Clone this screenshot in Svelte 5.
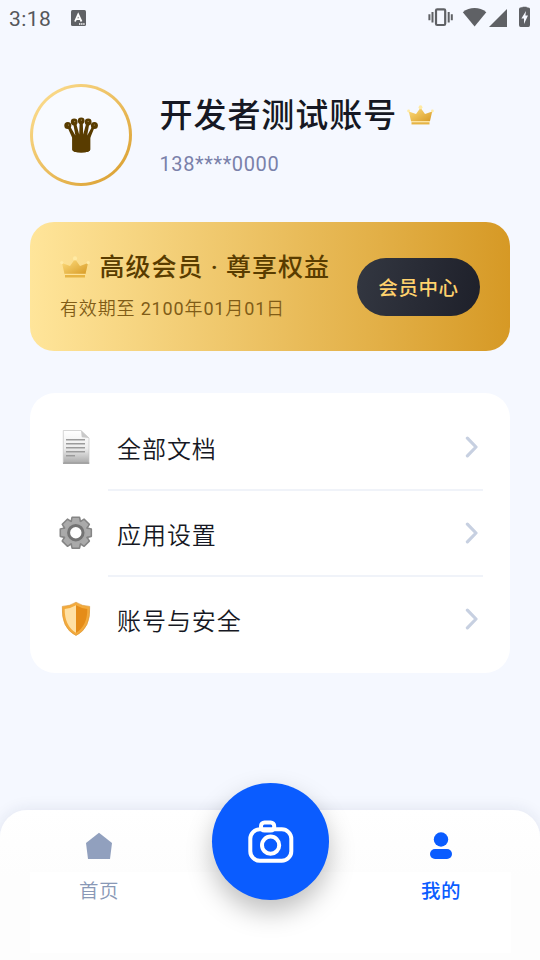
<script>
  const rows = [
    { icon: 'doc', label: '全部文档' },
    { icon: 'gear', label: '应用设置' },
    { icon: 'shield', label: '账号与安全' }
  ];
  const teeth = [0, 45, 90, 135, 180, 225, 270, 315];
</script>

{#snippet crown(w, h, id)}
  <svg width={w} height={h} viewBox="0 0 30 22">
    <defs>
      <linearGradient id={id} x1="0" y1="0" x2="1" y2="1">
        <stop offset="0" stop-color="#ffdf80" /><stop offset="1" stop-color="#d79a25" />
      </linearGradient>
    </defs>
    <path d="M2 7 L10 10 L15 3 L20 10 L28 7 L25.5 18 H4.5Z" fill="url(#{id})" />
    <path d="M5 19 H25 V21.5 H5Z" fill="#e7b443" />
    <path d="M4.7 18.3H25.3" stroke="#ffe39a" stroke-width="1" />
    <circle cx="1.8" cy="6.6" r="1.6" fill="#ffeaa4" />
    <circle cx="15" cy="2.4" r="2.1" fill="#ffeaa4" />
    <circle cx="28.2" cy="6.6" r="1.6" fill="#ffeaa4" />
  </svg>
{/snippet}

<div class="screen">
  <header class="status">
    <span class="time">3:18</span>
    <svg class="app" width="15" height="16" viewBox="0 0 15 16">
      <rect width="15" height="16" rx="1.5" fill="#5f6165" />
      <path d="M4 11.5 7.2 4.5 10.5 11.5M5.3 9.2H9.2" fill="none" stroke="#fff" stroke-width="1.8" />
      <path d="M8 14H14" stroke="#fff" stroke-width="1.5" stroke-dasharray="1.4 .7" />
    </svg>
    <svg class="sys" width="104" height="24" viewBox="0 0 104 24" fill="#5f6165">
      <rect x="8" y="5.4" width="9.2" height="15.6" rx="1.2" fill="none" stroke="#5f6165" stroke-width="2.2" />
      <path d="M4.5 8v10.5M20.7 8v10.5M1.4 10.3v6M23.8 10.3v6" stroke="#5f6165" stroke-width="2" />
      <path d="M34.8 8.2C41.5 2.6 51.6 2.6 58.3 8.2L46.6 22.4Z" />
      <path d="M79 5V23H61Z" />
      <path d="M93.4 3.2h1.2V2.8h4V3.2q3.4 0 3.4 1.8V21q0 2-1.6 2h-7.8Q91 23 91 21V5q0-1.8 2.4-1.8z" />
      <path d="M98 7 93.4 14.5h2.6v5.5L100 11.5H97.4z" fill="#f5f8ff" />
    </svg>
  </header>

  <section class="profile">
    <div class="avatar">
      <svg width="34" height="36" viewBox="0 0 34 36">
        <path d="M2.5 8 8.3 21V32.5Q8 35.5 17.2 35.5T26.2 32.5V21L31.5 8 29 8 23.2 18.5 25.6 5 22.6 5 19.2 17.5 18.7 3H15.7L15.2 17.5 11.8 5 8.9 5 11.4 18.5 5.4 8Z" fill="#593c00" />
        <path d="M8.3 19.5H26.2V32.5Q26 35.5 17.2 35.5T8.3 32.5Z" fill="#593c00" />
        <g fill="#593c00">
          <circle cx="3.8" cy="8.5" r="3.5" /><circle cx="10.2" cy="5" r="3.4" /><circle cx="17.2" cy="3.8" r="3.4" /><circle cx="24.2" cy="5" r="3.4" /><circle cx="30.4" cy="8.5" r="3.5" />
        </g>
        <g fill="#a28f62">
          <circle cx="4.5" cy="8" r=".6" /><circle cx="10.7" cy="4.6" r=".6" /><circle cx="17.4" cy="3.1" r=".6" /><circle cx="24.2" cy="4.5" r=".6" /><circle cx="30.3" cy="8" r=".6" />
        </g>
      </svg>
    </div>
    <div class="who">
      <div class="name"><span>开发者测试账号</span>{@render crown(27, 20, 'crownSmall')}</div>
      <div class="phone">138****0000</div>
    </div>
  </section>

  <section class="vip">
    <div class="info">
      <div class="level">{@render crown(30, 22, 'crownLarge')}<span>高级会员 · 尊享权益</span></div>
      <div class="until">有效期至 <b>2100</b>年<b>01</b>月<b>01</b>日</div>
    </div>
    <button>会员中心</button>
  </section>

  <section class="menu">
    {#each rows as row}
      <div class="row">
        <div class="icon">
          {#if row.icon === 'doc'}
            <svg width="34" height="36" viewBox="0 0 34 36">
              <defs>
                <linearGradient id="paper" x1="0" y1="0" x2="0" y2="1">
                  <stop offset="0" stop-color="#fff" /><stop offset=".55" stop-color="#ececec" /><stop offset="1" stop-color="#a9a9a9" />
                </linearGradient>
              </defs>
              <path d="M4.3 1.5H22L30 9V34.3H4.3Z" fill="url(#paper)" stroke="#c4c4c4" stroke-width=".7" />
              <path d="M22 1.5 22.8 8.2 30 9Z" fill="#c9c9c9" />
              <path d="M4 34.2H30.3" stroke="#8f8f8f" stroke-width="1" />
              <path d="M7 10.8H26M7 14.8H26M7 18.8H26M7 22.8H26M7 26.8H16" stroke="#9b9b9b" stroke-width="1.6" />
            </svg>
          {:else if row.icon === 'gear'}
            <svg width="34" height="36" viewBox="0 0 34 36">
              <g transform="translate(16.8 17.7)">
                <g fill="#a8a8a8" stroke="#858585" stroke-width="1.8" stroke-linejoin="round">
                  {#each teeth as a}
                    <path transform="rotate({a})" d="M-4.6-11-3.6-15.4H3.6L4.6-11Z" />
                  {/each}
                  <circle r="12.3" />
                </g>
                <g fill="#aaa">
                  {#each teeth as a}
                    <path transform="rotate({a})" d="M-4-10-3.1-14.6H3.1L4-10Z" />
                  {/each}
                </g>
                <circle r="7.2" fill="#fff" stroke="#737373" stroke-width="3" />
              </g>
            </svg>
          {:else}
            <svg width="34" height="36" viewBox="0 0 34 36">
              <path d="M17 1.2Q23 5.2 30.7 5.4Q32 27 17 34.6Q2 27 3.3 5.4Q11 5.2 17 1.2Z" fill="#f3aa3c" stroke="#d99636" stroke-width=".6" />
              <path d="M17 4.3Q11.5 7.6 5.7 8Q5.6 25 17 31.8Z" fill="#ffe0a3" />
              <path d="M17 4.3Q22.5 7.6 28.3 8Q28.4 25 17 31.8Z" fill="#e58c18" />
            </svg>
          {/if}
        </div>
        <span>{row.label}</span>
        <svg class="chev" width="14" height="22" viewBox="0 0 14 22">
          <path d="M2.4 2.2 11 11 2.4 19.8" fill="none" stroke="#c7d0e1" stroke-width="3.2" stroke-linecap="round" stroke-linejoin="round" />
        </svg>
      </div>
    {/each}
  </section>

  <nav>
    <div class="tab">
      <svg width="28" height="30" viewBox="0 0 28 30"><path d="M14 1.8 27 12 25 28H3L1 12Z" fill="#91a0be" /></svg>
      <span>首页</span>
    </div>
    <div class="camera">
      <svg width="46" height="44" viewBox="0 0 46 44" fill="none" stroke="#fff" stroke-width="4">
        <rect x="2.3" y="9.3" width="41" height="31.4" rx="9.5" />
        <rect x="13" y="2.4" width="13.2" height="8.2" rx="3.5" />
        <circle cx="22.6" cy="25.2" r="8.6" />
      </svg>
    </div>
    <div class="tab active">
      <svg width="28" height="30" viewBox="0 0 28 30" fill="#0a5cff"><circle cx="14" cy="8.5" r="7.2" /><rect x="3" y="18" width="22" height="10" rx="5" /></svg>
      <span>我的</span>
    </div>
  </nav>
</div>

<style>
  .screen {
    width: 540px;
    height: 960px;
    background: #f5f8ff;
    font-family: Roboto, "Noto Sans CJK SC", sans-serif;
    color: #161823;
    display: flex;
    flex-direction: column;
    overflow: hidden;
    white-space: nowrap;
  }
  svg { display: block; flex: none; }
  .status { height: 36px; display: flex; padding: 0 9px 0 9px; flex: none; }
  .time { width: 62px; font-size: 21px; line-height: 38px; font-weight: 400; letter-spacing: .4px; color: #55575b; }
  .app { margin-top: 10px; }
  .sys { margin: 4px 0 0 auto; margin-right: -1px; }

  .profile { display: flex; height: 102px; margin: 48px 30px 0; flex: none; }
  .avatar {
    width: 102px;
    height: 102px;
    box-sizing: border-box;
    border: 3px solid transparent;
    border-radius: 50%;
    background: linear-gradient(#f8faff, #f8faff) padding-box, linear-gradient(135deg, #ffe297, #d89b29) border-box;
    display: flex;
    align-items: center;
    justify-content: center;
  }
  .who { margin-left: 27.5px; }
  .name { display: flex; align-items: center; font-size: 33px; line-height: 60px; height: 60px; padding-top: 1px; box-sizing: border-box; font-weight: 500; letter-spacing: .95px; gap: 10px; }
  .name span { padding-top: 2px; }
  .name svg { margin-top: 1px; }
  .phone { font-size: 20px; line-height: 40px; font-weight: 400; color: #7a81aa; letter-spacing: .6px; }

  .vip {
    margin: 36px 30px 0;
    height: 129px;
    flex: none;
    box-sizing: border-box;
    padding: 25px 30px 0;
    border-radius: 24px;
    background: linear-gradient(90deg, #ffe59a, #e2af46 73%, #d69925);
    display: flex;
    justify-content: space-between;
  }
  .level { display: flex; align-items: center; gap: 9.5px; height: 40px; font-size: 25px; font-weight: 500; letter-spacing: 1px; color: #593c00; }
  .level span { padding-bottom: 4px; }
  .until { font-size: 18px; line-height: 44px; letter-spacing: .85px; font-weight: 350; color: #805c17; }
  .until b { font-weight: 400; }
  button {
    width: 123px;
    height: 58px;
    margin-top: 11px;
    padding: 3px 0 0;
    border: 0;
    border-radius: 29px;
    background: linear-gradient(100deg, #333741, #1e202a);
    font: 500 19.5px/55px Roboto, "Noto Sans CJK SC", sans-serif;
    letter-spacing: .6px;
    color: #ffd26d;
  }

  .menu { margin: 42px 30px 0; height: 280px; flex: none; box-sizing: border-box; padding: 12px 27px 0 29px; background: #fff; border-radius: 25px; }
  .row { height: 86px; padding-bottom: 2px; box-sizing: border-box; display: flex; align-items: center; font-size: 24px; letter-spacing: .95px; font-weight: 350; }
  .row:not(:last-child) { background: linear-gradient(#f0f3f9, #f0f3f9) 49px 84px / 375px 2px no-repeat; }
  .icon { width: 34px; margin-right: 24px; }
  .chev { margin: 0 4px 0 auto; }

  nav {
    height: 150px;
    margin-top: auto;
    flex: none;
    border-radius: 27px 27px 0 0;
    background: linear-gradient(#fff, #fff) 30px 62px / 481px 81px no-repeat, linear-gradient(#fff, #fdfdfd 45%);
    box-shadow: 0 0 16px rgba(30, 40, 90, .1);
    display: flex;
    justify-content: space-between;
    padding: 0 43px 0 43px;
  }
  .tab { width: 112px; padding-top: 21px; display: flex; flex-direction: column; align-items: center; color: #8998b6; font-size: 19.5px; letter-spacing: .5px; font-weight: 350; }
  .tab span { line-height: 32px; margin-top: 15px; }
  .tab.active { color: #0a5cff; font-weight: 500; }
  .camera {
    width: 117px;
    height: 117px;
    margin-top: -27px;
    border-radius: 50%;
    background: #0a5cff;
    box-shadow: 0 12px 26px rgba(0, 0, 0, .25);
    display: flex;
    align-items: center;
    justify-content: center;
  }
  .camera svg { margin-left: 1px; }
</style>
